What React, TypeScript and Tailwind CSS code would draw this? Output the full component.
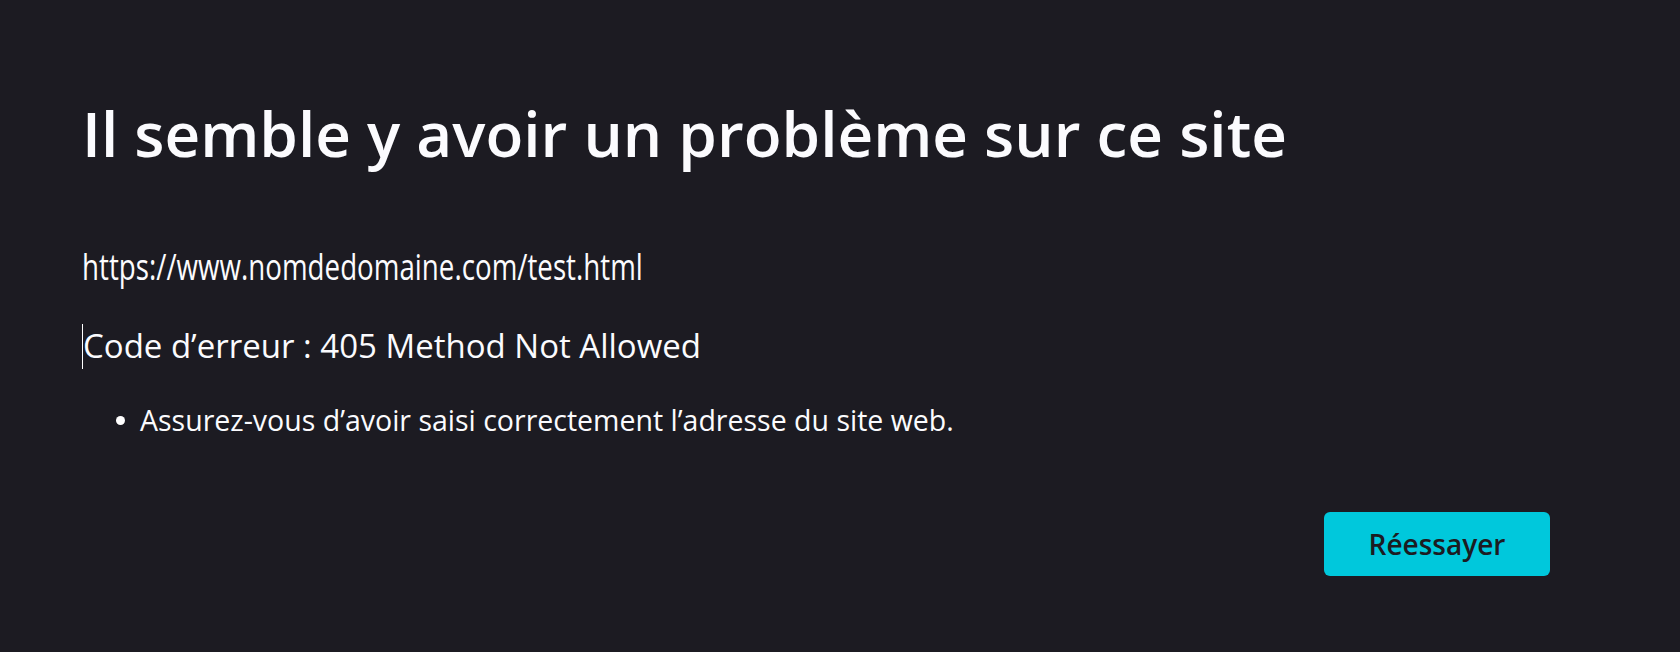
import React from "react";

export default function App() {
  return (
    <div
      className="w-[1680px] h-[652px] bg-[#1c1b22] text-white overflow-hidden"
      style={{ fontFamily: '"Open Sans", "Noto Sans", sans-serif' }}
    >
      <div className="w-[1468px] ml-[82px] pt-[97px] flex flex-col">
        <h1 className="text-[62px] leading-[72px] font-semibold text-[#fbfbfe] whitespace-nowrap">
          Il semble y avoir un problème sur ce site
        </h1>
        <div className="mt-[78px] h-[40px] flex items-center">
          <span className="inline-block origin-left scale-x-[0.77] text-[36px] leading-[40px] text-[#fbfbfe] whitespace-nowrap">
            https://www.nomdedomaine.com/test.html
          </span>
        </div>
        <div className="mt-[36px] flex items-center h-[46px]">
          <div className="w-px h-[45px] bg-white" />
          <span className="text-[33px] leading-[40px] text-[#fbfbfe] whitespace-nowrap">
            Code d’erreur : 405 Method Not Allowed
          </span>
        </div>
        <ul className="mt-[34px] flex flex-col">
          <li className="flex items-center h-[34px]">
            <span className="ml-[34px] w-[9px] h-[9px] rounded-full bg-white" />
            <span className="ml-[15px] text-[28.5px] leading-[34px] text-[#fbfbfe] whitespace-nowrap">
              Assurez-vous d’avoir saisi correctement l’adresse du site web.
            </span>
          </li>
        </ul>
        <div className="mt-[75px] flex justify-end">
          <button className="w-[226px] h-[64px] rounded-[6px] bg-[#00c8dc] text-[#1c1b22] text-[28px] font-semibold">
            Réessayer
          </button>
        </div>
      </div>
    </div>
  );
}
